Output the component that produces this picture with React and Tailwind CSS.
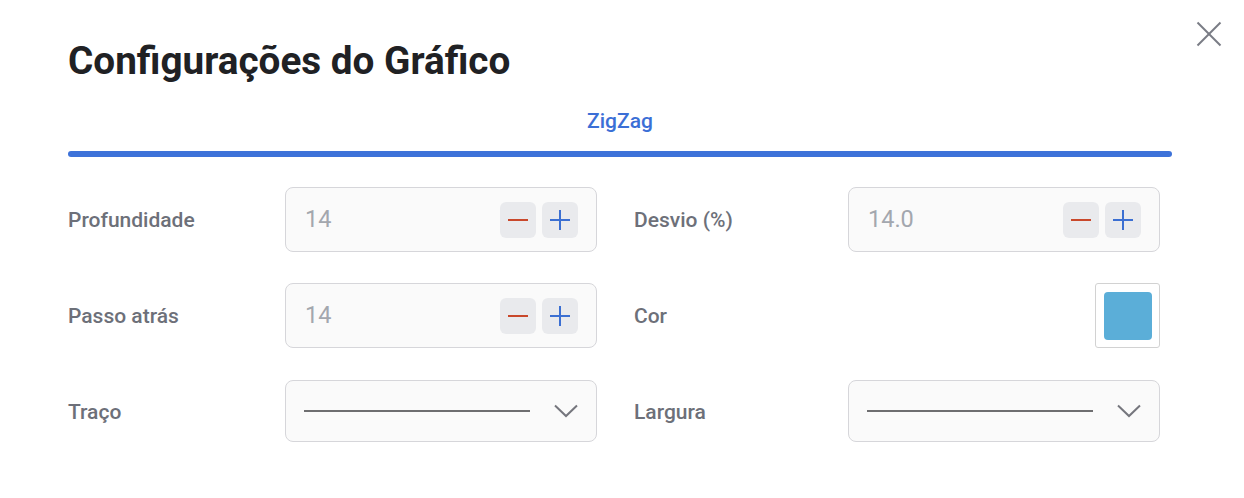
function Stepper({ value }) {
  return (
    <div className="flex h-[65px] w-[312px] items-center justify-between rounded-[8px] border border-[#d6d6da] bg-[#fafafa] pl-[19px] pr-[18px]">
      <span className="pt-[1px] text-[23.5px] text-[#a3a7ae]">{value}</span>
      <div className="flex gap-[6px]">
        <button className="flex h-9 w-9 items-center justify-center rounded-[6px] bg-[#e9eaed]">
          <span className="block h-[2px] w-[20px] bg-[#c9482b]" />
        </button>
        <button className="relative flex h-9 w-9 items-center justify-center rounded-[6px] bg-[#e9eaed]">
          <span className="block h-[2px] w-[20px] bg-[#3b6fd2]" />
          <span className="absolute left-[17px] top-[8px] block h-[20px] w-[2px] bg-[#3b6fd2]" />
        </button>
      </div>
    </div>
  );
}

function LineSelect() {
  return (
    <div className="flex h-[62px] w-[312px] items-center rounded-[8px] border border-[#d6d6da] bg-[#fafafa] pl-[18px] pr-[18px]">
      <span className="block h-[2px] w-[226px] bg-[#6e6e70]" />
      <svg className="ml-auto" width="24" height="14" viewBox="0 0 24 14" fill="none">
        <polyline points="1,1.5 12,12 23,1.5" stroke="#75767d" strokeWidth="2" />
      </svg>
    </div>
  );
}

function Label({ children, w }) {
  return (
    <div className={`${w} pt-[3px] text-[21px] font-medium text-[#6d7079]`}>{children}</div>
  );
}

export default function App() {
  return (
    <div className="relative h-[498px] w-[1244px] bg-white font-['Roboto',sans-serif]">
      <button className="absolute left-[1196px] top-[21px]">
        <svg width="26" height="26" viewBox="0 0 26 26" fill="none">
          <line x1="1.5" y1="1.5" x2="24.5" y2="24.5" stroke="#7a7c85" strokeWidth="2" />
          <line x1="24.5" y1="1.5" x2="1.5" y2="24.5" stroke="#7a7c85" strokeWidth="2" />
        </svg>
      </button>
      <div className="px-[68px] pt-[42px]">
        <h1 className="text-[38.7px] font-bold leading-[38px] text-[#202124]">Configurações do Gráfico</h1>
        <div className="mt-[29px] w-[1104px]">
          <div className="text-center text-[21px] font-medium leading-[24px] text-[#3b6fd6]">ZigZag</div>
          <div className="mt-[18px] h-[6px] rounded-full bg-[#3d72d9]" />
        </div>
        <div className="mt-[30px] flex gap-[37px]">
          <div className="flex flex-col gap-[31px]">
            <div className="flex items-center">
              <Label w="w-[217px]">Profundidade</Label>
              <Stepper value="14" />
            </div>
            <div className="flex items-center">
              <Label w="w-[217px]">Passo atrás</Label>
              <Stepper value="14" />
            </div>
            <div className="mt-[1px] flex items-center">
              <Label w="w-[217px]">Traço</Label>
              <LineSelect />
            </div>
          </div>
          <div className="flex flex-col gap-[31px]">
            <div className="flex items-center">
              <Label w="w-[214px]">Desvio (%)</Label>
              <Stepper value="14.0" />
            </div>
            <div className="flex h-[65px] items-center">
              <Label w="w-[214px]">Cor</Label>
              <div className="ml-auto flex h-[65px] w-[65px] items-center justify-center rounded-[3px] border border-[#d2d2d2] bg-white">
                <div className="h-[48px] w-[48px] rounded-[4px] bg-[#5baed8]" />
              </div>
            </div>
            <div className="mt-[1px] flex items-center">
              <Label w="w-[214px]">Largura</Label>
              <LineSelect />
            </div>
          </div>
        </div>
      </div>
    </div>
  );
}
